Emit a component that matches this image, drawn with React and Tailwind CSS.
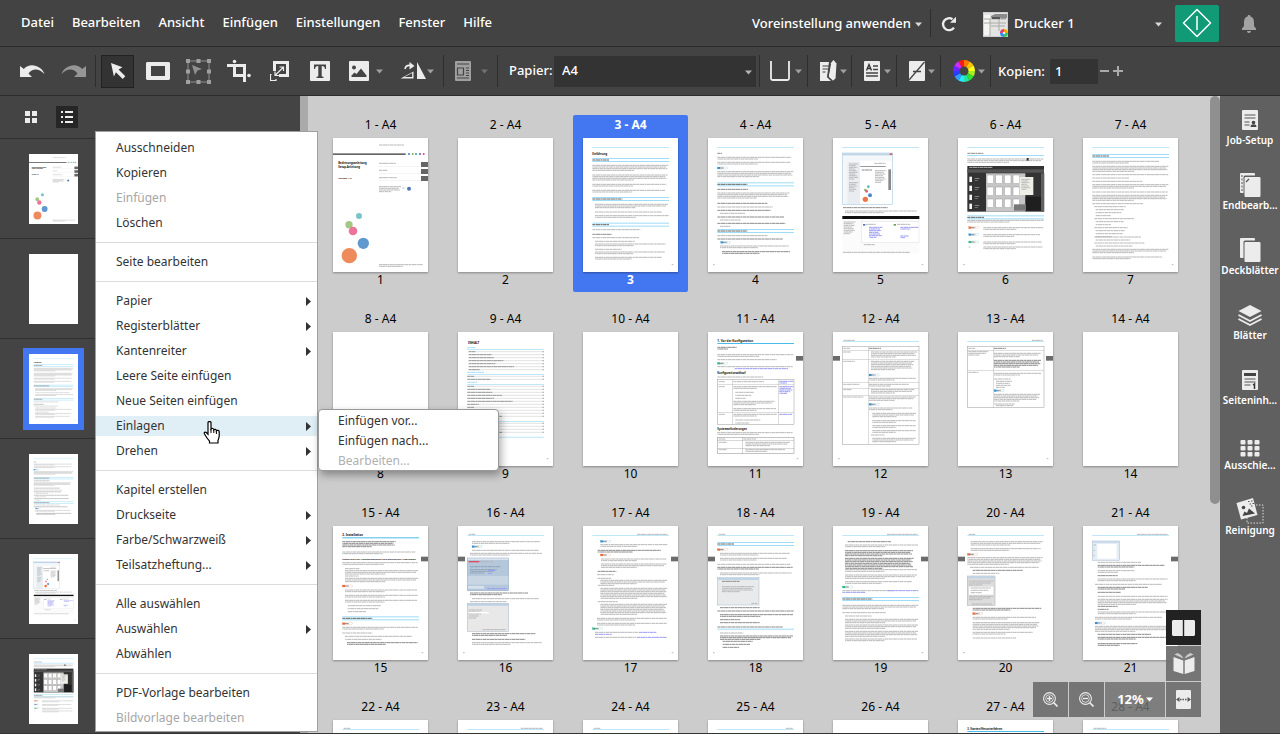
import React from "react";

/* Miniature pages are described in a 285 x 402 unit space. */
const CYAN = "#9fdcf7";
const head = ["r", 28, 27, 230, 2, CYAN];
const tabR = ["r", 264, 92, 21, 14, "#6b6b6b"];
const tabL = ["r", 0, 92, 21, 14, "#6b6b6b"];
const odd = ["t", 266, 380, 5, 1];
const even = ["t", 15, 380, 5, 1];

const PAGES = {
  1: [
    ["t", 138, 21, 76, 1], ["r", 0, 46, 218, 5, "#666"],
    ["c", 228, 48, 3, "#3f7fc4"], ["c", 239, 48, 3, "#7cb854"], ["c", 249, 48, 3, "#2ba5ae"], ["c", 261, 48, 3, "#7d4f9e"], ["c", 272, 48, 3, "#e3447c"],
    ["x", 16, 79, "Bedienungsanleitung", 8], ["x", 16, 89, "Setup-Anleitung", 8], ["x", 16, 123, "Version: 1.2", 7],
    ["t", 138, 76, 50, 1], ["r", 138, 85, 124, 1, "#ddd"], ["t", 138, 97, 26, 1], ["r", 138, 106, 124, 1, "#ddd"], ["t", 138, 119, 54, 1], ["r", 138, 127, 124, 1, "#ddd"],
    ["r", 264, 72, 21, 15, "#666"], ["r", 264, 93, 21, 15, "#666"], ["r", 264, 114, 21, 15, "#666"],
    ["t", 138, 146, 66, 4], ["t", 208, 150, 6, 1], ["c", 228, 152, 6, "#4c78b8"], ["t", 138, 380, 132, 2],
    ["c", 78, 234, 9, "#7ac4c8"], ["c", 48, 260, 11, "#a2c883"], ["c", 60, 279, 13, "#ee7399"], ["c", 91, 316, 17, "#6098d0"], ["c", 49, 353, 23, "#ee8b5c"],
  ],
  2: [],
  3: [
    head, ["x", 28, 51, "Einführung", 8], ["w", 60],
    ["t", 28, 82, 228, 4], ["t", 28, 111, 226, 4], ["t", 28, 139, 222, 2], ["t", 28, 157, 218, 2], ["w", 177],
    ["t", 36, 199, 220, 3], ["t", 36, 222, 200, 1], ["t", 36, 233, 222, 2], ["w", 254], ["t", 28, 275, 144, 1], ["b", 28, 289, 58, 1], ["t", 28, 299, 140, 1],
    ["t", 36, 310, 120, 1], ["t", 36, 318, 212, 2], ["t", 36, 334, 80, 1], ["t", 36, 342, 210, 2], ["t", 36, 358, 200, 2], odd,
  ],
  4: [
    head, ["b", 28, 46, 14, 1], ["t", 28, 58, 222, 2], ["t", 28, 73, 220, 2], ["n", 28, 90, "#3992cf"], ["t", 28, 101, 228, 4], ["w", 133],
    ["b", 28, 154, 92, 1], ["t", 28, 165, 216, 4], ["b", 28, 196, 150, 1], ["t", 28, 207, 166, 1], ["b", 28, 217, 160, 1], ["t", 36, 226, 76, 1], ["b", 28, 237, 200, 1], ["t", 36, 246, 62, 1], ["b", 28, 256, 204, 1], ["t", 36, 265, 32, 1], ["w", 273],
    ["t", 28, 293, 150, 1], ["b", 28, 303, 196, 1], ["n", 38, 313, "#3992cf"], ["t", 36, 324, 206, 2], ["b", 42, 341, 204, 2], even,
  ],
  5: [
    head, ["s", 28, 45, 151, 155, "#f4f7fa", "#9cc2df"], ["r", 29, 46, 149, 6, "#bed3e6"], ["r", 170, 46, 8, 5, "#c86464"],
    ["r", 82, 68, 94, 130, "#fff"], ["t", 124, 76, 34, 1], ["r", 82, 84, 76, 2, "#666"], ["r", 43, 72, 38, 126, "#e9edf0"], ["t", 48, 78, 28, 10], ["t", 48, 134, 28, 6], ["t", 126, 98, 34, 8],
    ["r", 166, 94, 8, 62, "#888"], ["b", 86, 96, 32, 1], ["c", 106, 146, 4, "#58b9bf"], ["c", 97, 156, 4, "#89bd66"], ["c", 101, 160, 4, "#e65288"], ["c", 111, 172, 6, "#4d89c7"], ["c", 97, 184, 8, "#ec7648"],
    ["b", 30, 209, 134, 1], ["t", 36, 219, 215, 2], ["r", 28, 234, 231, 9, "#111"], ["r", 28, 243, 231, 104, "#fbfbfc"], ["s", 86, 250, 172, 64, "#fff", "#ddd"],
    ["t", 32, 252, 36, 8], ["l", 108, 268, 40, 7], ["l", 202, 268, 55, 2], ["l", 202, 294, 26, 2], ["r", 90, 258, 7, 5, "#4f78bd"], ["r", 182, 258, 7, 5, "#65a25b"], ["t", 98, 259, 30, 1], ["t", 192, 259, 40, 1], ["t", 92, 320, 34, 1], ["t", 30, 343, 200, 1], odd,
  ],
  6: [
    head, ["b", 28, 46, 48, 1], ["r", 28, 51, 230, 3, CYAN], ["t", 28, 63, 228, 3], ["r", 206, 60, 6, 8, "#333"],
    ["r", 28, 84, 230, 137, "#333"], ["r", 28, 94, 230, 10, "#555"], ["t", 34, 88, 70, 1], ["r", 84, 106, 118, 115, "#c6c6c6"],
    ...[0, 1, 2].flatMap((r) => [0, 1, 2, 3].map((c) => ["s", 87 + c * 26, 111 + r * 36, 20, 26, "#fff", "#999"])),
    ...[0, 1, 2, 3].flatMap((r) => [["r", 34, 116 + r * 27, 8, 16, "#f5f5f5"], ["r", 50, 120 + r * 27, 14, 2, "#aaa"], ["r", 50, 126 + r * 27, 10, 2, "#888"]]),
    ["r", 185, 117, 41, 54, "#eef0e8"], ["t", 190, 124, 28, 7], ["r", 203, 176, 46, 42, "#1f1f1f"], ["r", 249, 106, 10, 115, "#606060"], ["r", 168, 199, 36, 19, "#777"],
    ["w", 232], ["t", 28, 247, 230, 2],
    ["n", 32, 269, "#e56a3c"], ["t", 76, 269, 180, 2], ["n", 32, 290, "#3992cf"], ["t", 76, 290, 170, 2], ["n", 32, 312, "#35b58c"], ["t", 76, 312, 176, 2], ["t", 32, 327, 5, 1], ["t", 76, 327, 178, 2], even,
  ],
  7: [
    head, ["w", 48], ["t", 28, 70, 200, 2], ["t", 28, 85, 228, 4], ["t", 28, 110, 228, 1], ["t", 28, 120, 110, 1], ["t", 28, 130, 150, 1], ["t", 28, 140, 228, 3], ["t", 28, 162, 226, 1], ["t", 28, 172, 226, 4], ["t", 28, 197, 152, 1],
    ["t", 34, 206, 94, 1], ["t", 38, 215, 84, 3, 9], ["t", 34, 242, 120, 1], ["t", 38, 251, 84, 2, 9], ["t", 34, 269, 100, 1], ["t", 38, 278, 88, 3, 9], ["t", 34, 297, 140, 1], ["t", 38, 306, 104, 1], ["t", 34, 315, 150, 1], ["t", 38, 324, 110, 1],
    ["t", 28, 334, 228, 3], ["t", 28, 357, 210, 2], odd,
  ],
  8: [],
  9: [
    ["x", 30, 35, "INHALT", 9], ["l2", 28, 47, 24, 1], ["r", 28, 51, 230, 2, CYAN], ["d", 32, 59, 7], ["l2", 28, 121, 50, 1], ["r", 28, 126, 230, 2, CYAN], ["d", 28, 133, 2],
    ["l2", 28, 151, 30, 1], ["r", 28, 156, 230, 2, CYAN], ["d", 28, 163, 11], ["r", 28, 268, 230, 2, CYAN], ["d", 28, 274, 4], ["r", 28, 314, 230, 4, "#cdeaf8"], odd,
  ],
  10: [],
  11: [
    ["x", 28, 31, "1. Vor der Konfiguration", 9], ["r", 28, 33, 230, 3, "#4bbbe9"], ["b", 28, 46, 58, 2], ["t", 28, 68, 228, 2], ["t", 28, 83, 178, 1], ["n", 28, 94, "#35b58c"], ["t", 28, 104, 226, 1], ["l", 80, 110, 160, 1],
    ["x", 28, 127, "Konfigurationsablauf", 8], ["t", 28, 135, 138, 1],
    ["s", 28, 142, 230, 136, "#fff", "#999"], ["r", 73, 142, 1, 136, "#999"], ["r", 211, 142, 1, 136, "#999"], ["r", 28, 157, 230, 1, "#999"], ["r", 28, 242, 230, 1, "#999"],
    ["t", 32, 149, 18, 1], ["t", 76, 149, 92, 1], ["l", 214, 148, 42, 2], ["t", 32, 164, 18, 1], ["t", 76, 164, 130, 2], ["l", 214, 164, 42, 5], ["t", 82, 181, 56, 3, 9], ["t", 76, 208, 124, 3], ["t", 76, 230, 128, 2], ["t", 32, 247, 18, 1], ["t", 76, 247, 130, 2], ["l", 214, 247, 38, 1], ["t", 82, 264, 76, 2, 9],
    ["x", 28, 295, "Systemanforderungen", 8], ["t", 28, 302, 226, 2], ["s", 28, 316, 230, 49, "#fff", "#888"], ["r", 103, 316, 1, 49, "#888"], ["r", 28, 326, 230, 1, "#888"], ["r", 28, 349, 230, 1, "#888"],
    ["t", 32, 321, 20, 1], ["t", 106, 321, 38, 1], ["t", 32, 331, 24, 1], ["t", 112, 331, 134, 3], ["t", 32, 353, 24, 1], ["t", 112, 353, 120, 2], sideTab(264), odd,
  ],
  12: [
    ["t", 32, 25, 34, 1], head, ["s", 28, 44, 230, 293, "#fff", "#999"], ["r", 105, 44, 1, 293, "#999"], ["r", 28, 54, 230, 1, "#999"], ["r", 28, 82, 230, 1, "#999"], ["r", 28, 152, 230, 1, "#999"], ["r", 28, 168, 230, 1, "#999"], ["r", 28, 190, 230, 1, "#999"],
    ["t", 31, 49, 20, 1], ["b", 108, 49, 36, 1], ["t", 31, 60, 22, 1], ["t", 114, 60, 138, 4], ["t", 31, 88, 34, 1], ["t", 114, 88, 130, 6], ["n", 108, 129, "#3992cf"], ["t", 108, 139, 140, 2], ["t", 31, 157, 48, 1], ["t", 108, 157, 120, 2], ["t", 31, 173, 24, 1], ["t", 114, 173, 130, 3], ["t", 31, 195, 60, 1], ["t", 108, 195, 140, 3], ["n", 108, 217, "#3992cf"], ["t", 108, 228, 130, 2], ["t", 118, 244, 132, 3], ["t", 118, 266, 130, 2], ["t", 118, 281, 130, 2], ["t", 118, 296, 130, 2], ["t", 114, 309, 40, 1], ["t", 118, 319, 130, 3], sideTab(0), even,
  ],
  13: [
    ["t", 222, 25, 33, 1], head, ["s", 28, 44, 230, 183, "#fff", "#999"], ["r", 105, 44, 1, 183, "#999"], ["r", 28, 54, 230, 1, "#999"], ["r", 28, 115, 230, 1, "#999"],
    ["t", 31, 49, 20, 1], ["b", 108, 49, 36, 1], ["t", 31, 59, 60, 3], ["t", 108, 64, 140, 3], ["b", 108, 85, 142, 5], ["t", 31, 121, 30, 1], ["t", 108, 124, 142, 2], ["t", 108, 141, 50, 1], ["t", 114, 148, 48, 4, 6], ["n", 108, 176, "#3992cf"], ["t", 108, 187, 138, 5], ["t", 108, 216, 62, 1], ["t", 114, 221, 52, 1], sideTab(264), odd,
  ],
  14: [],
  15: [
    ["x", 28, 31, "2. Installation", 9], ["r", 28, 34, 230, 3, "#4bbbe9"], ["b", 28, 47, 160, 4], ["t", 28, 78, 220, 2], ["x", 28, 102, "Installieren der Hauptanwendung und zugehöriger Programme", 7], ["t", 28, 110, 226, 2],
    ["t", 36, 128, 44, 1], ["t", 36, 134, 220, 3], ["t", 36, 150, 40, 1], ["t", 36, 157, 220, 3], ["n", 28, 180, "#e56a3c"], ["t", 36, 192, 216, 2], ["t", 36, 208, 218, 2], ["t", 36, 223, 216, 2], ["t", 44, 239, 100, 3, 9], ["w", 271], ["n", 28, 293, "#e56a3c"], ["t", 28, 304, 226, 2], ["t", 28, 321, 90, 1], ["t", 36, 331, 200, 2, 9], ["b", 42, 350, 212, 2], tabR, odd,
  ],
  16: [
    ["t", 32, 25, 20, 1], head, ["t", 42, 47, 204, 2], ["n", 42, 62, "#3992cf"], ["t", 42, 73, 200, 1], ["t", 36, 82, 216, 2],
    ["s", 28, 96, 124, 98, "#b5c7da", "#8aa4be"], ["r", 29, 97, 122, 5, "#dce5ef"], ["r", 29, 150, 122, 26, "#c8d6e4"], ["r", 32, 105, 32, 4, "#e04b5c"], ["t", 66, 107, 40, 1], ["g", 36, 122, 92, 1], ["g", 36, 131, 80, 3], ["l", 90, 133, 22, 2, 9], ["r", 30, 180, 48, 8, "#d8e2ec"], ["l", 88, 188, 58, 1],
    ["b", 36, 201, 174, 2], ["t", 42, 218, 200, 1], ["t", 36, 227, 110, 1], ["s", 28, 232, 124, 84, "#e8e8e8", "#a9b4c0"], ["r", 29, 233, 122, 6, "#b9d0e8"], ["t", 32, 252, 40, 5, 6], ["r", 32, 258, 60, 4, "#fff"], ["t", 74, 311, 70, 1],
    ["b", 42, 323, 190, 2], ["b", 42, 340, 160, 1], ["t", 42, 350, 210, 2], tabL, even,
  ],
  17: [
    ["t", 162, 25, 92, 1], head, ["n", 52, 46, "#3992cf"], ["t", 52, 56, 202, 2], ["b", 44, 73, 190, 2], ["n", 52, 87, "#e56a3c"], ["t", 54, 99, 196, 2], ["t", 54, 114, 196, 3], ["b", 44, 136, 56, 1], ["t", 42, 146, 50, 1], ["t", 44, 157, 40, 1], ["t", 52, 163, 200, 3], ["t", 44, 178, 50, 1], ["t", 52, 187, 202, 7], ["t", 44, 227, 60, 1], ["t", 52, 235, 200, 7], ["t", 42, 277, 210, 2], ["t", 42, 292, 210, 2], ["n", 28, 308, "#35b58c"], ["t", 36, 319, 130, 1], ["l", 168, 319, 52, 1], ["l", 36, 325, 50, 1], ["t", 36, 334, 124, 1], ["l", 162, 334, 90, 1], tabR, odd,
  ],
  18: [
    ["t", 32, 25, 20, 1], head, ["w", 48], ["n", 28, 71, "#e56a3c"], ["t", 36, 82, 210, 2], ["t", 36, 97, 200, 2], ["t", 28, 115, 220, 1], ["b", 28, 124, 226, 2], ["t", 36, 141, 215, 2],
    ["s", 28, 155, 125, 82, "#e8eaec", "#a9b8c6"], ["r", 29, 156, 123, 6, "#c1d5e9"], ["b", 42, 166, 54, 1], ["t", 42, 182, 96, 4], ["t", 130, 232, 18, 1],
    ["b", 36, 245, 120, 1], ["b", 28, 255, 230, 1], ["b", 36, 266, 220, 2], ["b", 36, 281, 60, 1], ["b", 36, 290, 120, 1], ["b", 28, 303, 196, 1], ["r", 28, 308, 230, 3, CYAN], ["t", 36, 321, 70, 1], ["b", 36, 330, 220, 3], ["b", 44, 346, 90, 3, 9], tabL, even,
  ],
  19: [
    ["t", 162, 25, 92, 1], head, ["b", 44, 47, 130, 1], ["t", 36, 57, 220, 2], ["b", 36, 74, 204, 4], ["b", 36, 97, 206, 7], ["t", 36, 131, 216, 2], ["t", 36, 147, 216, 3], ["t", 36, 167, 200, 2], ["n", 28, 183, "#35b58c"], ["t", 28, 194, 150, 1], ["l", 164, 194, 92, 1], ["l", 28, 199, 70, 1], ["w", 213], ["t", 28, 238, 228, 3], ["t", 28, 260, 130, 1], ["t", 36, 270, 80, 1], ["t", 36, 280, 220, 3], ["t", 36, 297, 220, 3], ["t", 36, 316, 220, 4], ["t", 36, 339, 216, 2], tabR, odd,
  ],
  20: [
    ["t", 32, 25, 20, 1], head, ["t", 38, 47, 216, 3], ["t", 38, 68, 210, 2], ["n", 28, 85, "#e56a3c"], ["t", 28, 95, 226, 5], ["t", 36, 124, 206, 1], ["b", 44, 133, 150, 1], ["t", 44, 142, 80, 1],
    ["s", 28, 150, 83, 88, "#ddd", "#a9a9a9"], ["r", 29, 151, 81, 6, "#c1d5e9"], ["t", 32, 165, 74, 3, 6], ["r", 33, 182, 73, 24, "#fff"], ["t", 38, 186, 60, 3, 7], ["t", 33, 211, 72, 3], ["t", 42, 234, 60, 1],
    ["b", 44, 247, 206, 2], ["n", 44, 263, "#e56a3c"], ["t", 44, 274, 190, 2], ["t", 44, 290, 200, 5], ["t", 44, 319, 180, 2], ["t", 44, 336, 130, 1], tabL, even,
  ],
  21: [
    ["t", 162, 25, 92, 1], head, ["s", 28, 45, 82, 58, "#e4edf5", "#a9b8c6"], ["r", 29, 46, 80, 4, "#c1d5e9"], ["r", 43, 54, 58, 44, "#fff"], ["t", 31, 57, 8, 5, 8],
    ["t", 44, 109, 130, 1], ["b", 44, 118, 200, 2], ["t", 44, 134, 110, 2], ["b", 44, 149, 60, 1], ["t", 44, 159, 210, 2], ["t", 36, 175, 200, 1], ["b", 44, 184, 150, 2], ["b", 44, 199, 70, 1], ["t", 44, 211, 210, 1], ["t", 44, 220, 210, 4], ["b", 44, 241, 60, 2, 9], ["t", 44, 258, 210, 2], ["t", 36, 274, 200, 2], ["n", 36, 291, "#3992cf"], ["t", 36, 301, 220, 4], ["b", 44, 325, 160, 1], ["b", 44, 334, 210, 2], ["b", 44, 353, 120, 2], tabR, odd,
  ],
  22: [["t", 32, 25, 20, 1], head],
  23: [["t", 188, 25, 66, 1], head],
  24: [["t", 32, 25, 20, 1], head],
  25: [["t", 234, 25, 20, 1], head],
  26: [],
  27: [["x", 28, 31, "3. Starten/Herunterfahren", 8], ["r", 28, 33, 230, 3, "#4bbbe9"]],
  28: [["t", 32, 25, 38, 1], head],
};

function sideTab(x) {
  return ["r", x, 72, 21, 14, "#6b6b6b"];
}

function Lines({ x, y, w, n, pitch = 5, color, width = 3, dash = "9 1 14 1 6 1 11 1" }) {
  return Array.from({ length: n }, (_, i) => {
    const end = n > 1 && i === n - 1 ? w * 0.55 : w - ((i * 7) % 11);
    return (
      <line key={i} x1={x} x2={x + end} y1={y + i * pitch} y2={y + i * pitch} stroke={color} strokeWidth={width} strokeDasharray={dash} strokeDashoffset={i * 5} />
    );
  });
}

const INK = { t: "#b8b8b8", b: "#8c8c8c", l: "#9a9af2", l2: "#9fdcf7", g: "#8fa3b8" };

function Mark({ m }) {
  const [k, x, y, a, b, c] = m;
  switch (k) {
    case "r":
      return <rect x={x} y={y} width={a} height={b} fill={c} />;
    case "s":
      return <rect x={x} y={y} width={a} height={b} fill={c} stroke={m[6]} strokeWidth="1.5" />;
    case "c":
      return <circle cx={x} cy={y} r={a} fill={b} />;
    case "t":
    case "b":
    case "l":
    case "l2":
    case "g":
      return <Lines x={x} y={y} w={a} n={b} pitch={c} color={INK[k]} />;
    case "w":
      return (
        <g>
          <rect x="28" y={x} width="230" height="3" fill={CYAN} />
          <rect x="28" y={x + 9} width="230" height="3" fill={CYAN} />
          <Lines x={28} y={x + 6} w={x % 2 ? 90 : 50} n={1} color="#666" />
        </g>
      );
    case "n":
      return (
        <g>
          <rect x={x} y={y - 3} width="30" height="6" fill="#fff" stroke={a} strokeWidth=".5" />
          <rect x={x} y={y - 3} width="8" height="6" fill={a} />
          <Lines x={x + 8} y={y} w={12} n={1} color="#888" />
        </g>
      );
    case "d":
      return Array.from({ length: a }, (_, i) => (
        <g key={i}>
          <line x1={x} x2="255" y1={y + i * 9} y2={y + i * 9} stroke="#d4d4d4" strokeWidth="2" />
          <Lines x={x} y={y + i * 9} w={[20, 70, 76, 104, 80, 136, 34][i % 7]} n={1} color="#999" />
          <rect x="254" y={y + i * 9 - 2} width="3" height="4" fill="#999" />
        </g>
      ));
    case "x":
      return (
        <text x={x} y={y} fontSize={b} fontWeight="700" fill="#111">
          {a}
        </text>
      );
    default:
      return null;
  }
}

function Page({ n, className }) {
  return (
    <svg viewBox="0 0 285 402" preserveAspectRatio="none" className={className} aria-hidden="true">
      <rect width="285" height="402" fill="#fff" />
      {PAGES[n].map((m, i) => (
        <Mark key={i} m={m} />
      ))}
    </svg>
  );
}

const Caret = ({ className = "text-[#a0a0a0]" }) => (
  <svg width="7" height="5" viewBox="0 0 7 5" className={`shrink-0 ${className}`} aria-hidden="true">
    <path d="M0 .5h7L3.500 4.500z" fill="currentColor" />
  </svg>
);

const Sep = ({ className = "" }) => <div className={`h-8 w-px shrink-0 bg-[#2e2e2e] ${className}`} />;

function Icon({ w, h, children }) {
  return (
    <svg width={w} height={h} viewBox={`0 0 ${w} ${h}`} fill="none" className="shrink-0" aria-hidden="true">
      {children}
    </svg>
  );
}

const F = "#ececec";

function Tool({ label, className = "", caret, caretClass, children }) {
  return (
    <button type="button" aria-label={label} className={`flex h-9 shrink-0 items-center ${caret ? "" : "justify-center"} ${className}`}>
      {children}
      {caret && <Caret className={caretClass} />}
    </button>
  );
}

const WHEEL = ["#ff7a00", "#ffc400", "#ffff1a", "#a6f01c", "#2fe22f", "#22e6a0", "#28e8ff", "#2f9cff", "#2a3cff", "#6a28ff", "#d12cff", "#ff1a1a"];
function wedge(i) {
  const p = (a) => `${11 + 11 * Math.sin(a)} ${11 - 11 * Math.cos(a)}`;
  const s = Math.PI / 6;
  return `M11 11L${p(i * s)}A11 11 0 0 1 ${p((i + 1) * s)}Z`;
}
const Wheel = () => (
  <Icon w={22} h={22}>
    {WHEEL.map((c, i) => (
      <path key={c} d={wedge(i)} fill={c} />
    ))}
    <circle cx="11" cy="11" r="4.5" fill="#444" />
  </Icon>
);

function Header() {
  return (
    <header className="flex h-[47px] shrink-0 items-center border-b border-[#2c2c2c] text-[13px] font-medium text-white">
      <nav className="flex gap-[18px] pl-[21px]">
        {["Datei", "Bearbeiten", "Ansicht", "Einfügen", "Einstellungen", "Fenster", "Hilfe"].map((t) => (
          <button type="button" key={t}>{t}</button>
        ))}
      </nav>
      <div className="ml-auto flex items-center">
        <button type="button" className="flex items-center gap-1 pt-0.5">
          Voreinstellung anwenden
          <Caret className="text-[#d8d8d8]" />
        </button>
        <div className="ml-2 h-7 w-px bg-[#2e2e2e]" />
        <button type="button" aria-label="Aktualisieren" className="ml-2.5 pt-0.5">
          <Icon w={16} h={16}>
            <path d="M13 11.600A6 6 0 1 1 11.500 3.300" stroke={F} strokeWidth="2.300" />
            <path d="M15 .8v6H9z" fill={F} />
          </Icon>
        </button>
        <label className="ml-[26px] flex w-[179px] items-center pt-0.5">
          <Icon w={25} h={25}>
            <rect width="25" height="25" fill="#e4e4e2" />
            <path d="M8 4l4-2h12v4H8zM18 4h5v3h-5z" fill="#8b8b8b" />
            <path d="M1 3h6v20H1z" fill="#f5f5f3" />
            <path d="M1 7h22M1 11h22M8 14h14M7 7v17M16 7v12" stroke="#aaa" />
            <path d="M9 5h8v2H9z" fill="#555" />
            <path d="M0 0h25v25H0z" stroke="#bbb" />
            <circle cx="21" cy="21" r="4" fill="#fff" />
            <path d="M21 17a4 4 0 0 1 4 4h-4z" fill="#f7a400" />
            <path d="M25 21a4 4 0 0 1-4 4v-4z" fill="#35c46a" />
            <path d="M21 25a4 4 0 0 1-4-4h4z" fill="#2f8df5" />
            <path d="M17 21a4 4 0 0 1 4-4v4z" fill="#e43d77" />
            <circle cx="21" cy="21" r="1.300" fill="#eee" />
          </Icon>
          <select aria-label="Drucker" className="ml-1.5 h-7 min-w-0 grow appearance-none bg-transparent outline-none">
            <option>Drucker 1</option>
          </select>
          <Caret className="text-[#d8d8d8]" />
        </label>
        <button type="button" aria-label="Drucken" className="ml-[13px] flex h-[37px] w-11 items-center justify-center rounded-[2px] bg-[#109a76]">
          <Icon w={30} h={30}>
            <path d="M15 1.500L28.500 15 15 28.500 1.500 15zM15 8v14" stroke="#fff" strokeWidth="1.500" strokeLinejoin="round" />
          </Icon>
        </button>
        <button type="button" aria-label="Benachrichtigungen" className="mr-[23px] ml-[22px] pt-0.5">
          <Icon w={16} h={18}>
            <path d="M8 0c1 0 1.500.6 1.500 1.500C12 2.200 13 4.500 13 7v4l2 2.500V15H1v-1.500L3 11V7c0-2.500 1-4.800 3.500-5.500C6.500.6 7 0 8 0zM6 16h4c0 1.200-.8 2-2 2s-2-.8-2-2z" fill="#a3a3a3" />
          </Icon>
        </button>
      </div>
    </header>
  );
}

function Toolbar() {
  return (
    <div role="toolbar" className="flex h-[49px] shrink-0 items-center border-b border-[#2c2c2c] pl-3 text-[13px] font-medium text-white">
      <Tool label="Rückgängig" className="w-10">
        <Icon w={26} h={16}>
          <path d="M1 3v11h12L9.500 10.500C13 6 19 4.500 25.500 11 23 3 11-1.500 4.800 6z" fill={F} />
        </Icon>
      </Tool>
      <Tool label="Wiederholen" className="w-[43px]">
        <Icon w={26} h={16}>
          <path d="M25 3v11H13l3.500-3.500C13 6 7 4.500.5 11 3 3 15-1.500 21.200 6z" fill="#969696" />
        </Icon>
      </Tool>
      <Sep />
      <button type="button" aria-label="Auswählen" aria-pressed="true" className="ml-[5px] flex h-[33px] w-[33px] shrink-0 items-center justify-center border border-[#222] bg-[#333]">
        <Icon w={16} h={17}>
          <path d="M1 0l11.500 4.200-4 2.300 6.800 6.800-2.600 2.700-6.800-6.800-2 4.200z" fill={F} />
        </Icon>
      </button>
      <Tool label="Rahmen" className="w-12">
        <Icon w={24} h={18}>
          <path fillRule="evenodd" d="M1 0h22l1 1v16l-1 1H1l-1-1V1zM5 4v10h14V4z" fill={F} />
        </Icon>
      </Tool>
      <Tool label="Bereich anpassen" className="w-[33px]">
        <Icon w={25} h={25}>
          <path d="M2 2h21v21H2z" stroke="#8f8f8f" />
          <path d="M0 0h4v4H0zM10.500 0h4v4h-4zM21 0h4v4h-4zM0 10.500h4v4H0zM21 10.500h4v4h-4zM0 21h4v4H0zM10.500 21h4v4h-4zM21 21h4v4h-4z" fill="#a0a0a0" />
          <path d="M6 6l10 4-4.500 1.500L9 16z" fill="#8f8f8f" />
        </Icon>
      </Tool>
      <Tool label="Zuschneiden" className="w-12">
        <Icon w={24} h={24}>
          <path d="M0 6.500h17.500V23M7.500 6v10.500H19" stroke={F} strokeWidth="3" />
          <circle cx="7.500" cy="2.500" r="1.800" fill={F} />
          <circle cx="22" cy="16.500" r="1.800" fill={F} />
        </Icon>
      </Tool>
      <Tool label="Größe ändern" className="w-[33px]">
        <Icon w={20} h={20}>
          <path fillRule="evenodd" d="M3 0h16v16H9v-3h7V3H6v7H3z" fill={F} />
          <path d="M1.500 13.500h-1v6h5.500v-1.500" stroke={F} strokeWidth="1.200" />
          <path d="M5.500 14l7.500-7.500M9.500 6h4v4M5 10.500v4h4" stroke={F} strokeWidth="1.200" />
        </Icon>
      </Tool>
      <Tool label="Text" className="w-12">
        <Icon w={20} h={20}>
          <rect width="20" height="20" rx="1" fill={F} />
          <path d="M4 3.500h12V8h-1c-.2-2-1-3-3.300-3v9.500c0 1 .5 1.300 1.800 1.300V17h-7v-1.200c1.300 0 1.800-.3 1.800-1.300V5C6 5 5.200 6 5 8H4z" fill="#444" />
        </Icon>
      </Tool>
      <Tool label="Bild" className="w-12 gap-[7px] pl-[5px]" caret>
        <Icon w={20} h={20}>
          <rect width="20" height="20" rx="1" fill={F} />
          <circle cx="5" cy="6.500" r="2" fill="#444" />
          <path d="M2.500 16v-1.500l3-3 2 1.500L12 7.500l5.500 7V16z" fill="#444" />
        </Icon>
      </Tool>
      <Tool label="Spiegeln" className="w-[51px] gap-px pl-2" caret>
        <Icon w={26} h={18}>
          <path d="M.5 16.500h13v-7zM17 0l9 17h-9z" fill={F} />
          <path d="M4.500 15.100h7.600v-4.200z" fill="#444" />
          <path d="M5 7c.5-3 3-4 6-3.500" stroke={F} strokeWidth="1.600" />
          <path d="M9.500 0l5 4-5 3.500z" fill={F} />
        </Icon>
      </Tool>
      <Sep />
      <Tool label="Layout" className="w-[53px] gap-2.5 pl-[11px]" caret caretClass="text-[#727272]">
        <Icon w={16} h={20}>
          <rect width="16" height="20" rx="1" fill="#a0a0a0" />
          <path d="M2 3h12M2 17h12M11 7h3M11 9.500h3M11 12h3M11 14.500h3" stroke="#444" strokeWidth="1.200" />
          <path d="M2.500 7h6v7h-6z" stroke="#444" strokeWidth="1.200" />
        </Icon>
      </Tool>
      <Sep />
      <label htmlFor="paper" className="w-14 shrink-0 pl-[11px]">Papier:</label>
      <div className="relative w-[202px] min-w-0">
        <select id="paper" className="block h-[31px] w-full appearance-none bg-[#333] pl-2 outline-none">
          <option>A4</option>
        </select>
        <span className="pointer-events-none absolute top-[14px] right-1"><Caret className="text-[#b5b5b5]" /></span>
      </div>
      <Sep className="ml-[3px]" />
      <Tool label="Heften" className="w-[47px] gap-[5px] pl-2.5" caret>
        <Icon w={20} h={20}>
          <path d="M1 0v17.500a1.500 1.500 0 0 0 1.500 1.500h15a1.500 1.500 0 0 0 1.500-1.500V0" stroke={F} strokeWidth="1.800" />
        </Icon>
      </Tool>
      <Sep />
      <Tool label="Falzen" className="w-[43px] gap-[3px] pl-3" caret>
        <Icon w={17} h={22}>
          <path d="M0 2h9l-2 15 4 4H0z" fill={F} />
          <path d="M10.500 3.500L13.500 0l3 3.500-1 15-3 2.500-4-4z" fill={F} />
          <path d="M2.500 6h6.500M2.500 9h5.500M2.500 12h3" stroke="#444" strokeWidth="1.200" />
          <path d="M10.500 3.500L8 17l4.500 4" stroke="#444" strokeWidth="1.200" />
        </Icon>
      </Tool>
      <Sep />
      <Tool label="Kopfzeile" className="w-11 gap-1 pl-3" caret>
        <Icon w={16} h={20}>
          <rect width="16" height="20" rx="1" fill={F} />
          <path d="M9 5h5M9 8.500h5M2 12h12M2 15h12" stroke="#444" strokeWidth="1.300" />
          <path d="M2.500 9.500L5 3.500l2.500 6M3.500 7.500h3" stroke="#333" strokeWidth="1.300" />
        </Icon>
      </Tool>
      <Sep />
      <Tool label="Wasserzeichen" className="w-[43px] gap-[3px] pl-3" caret>
        <Icon w={16} h={20}>
          <rect width="16" height="20" rx="1" fill={F} />
          <path d="M0 19L15.500 1M4 10.500h8" stroke="#444" strokeWidth="1.300" />
        </Icon>
      </Tool>
      <Sep />
      <Tool label="Farbe" className="w-[49px] gap-[3px] pl-3" caret>
        <Wheel />
      </Tool>
      <Sep />
      <label htmlFor="copies" className="w-[59px] shrink-0 pt-0.5 pl-[7px]">Kopien:</label>
      <input id="copies" defaultValue="1" className="h-[25px] w-12 bg-[#333] pl-[5px] outline-none" />
      <button type="button" aria-label="Weniger" className="ml-0.5 shrink-0">
        <Icon w={9} h={10}><path d="M0 5h9" stroke="#aaa" strokeWidth="2" /></Icon>
      </button>
      <button type="button" aria-label="Mehr" className="ml-1 shrink-0">
        <Icon w={10} h={10}><path d="M0 5h10M5 0v10" stroke="#aaa" strokeWidth="2" /></Icon>
      </button>
    </div>
  );
}

function Sidebar() {
  return (
    <aside className="flex w-[300px] shrink-0 flex-col overflow-hidden bg-[#444]">
      <div className="flex h-[42px] shrink-0 items-center gap-3.5 pl-5">
        <button type="button" aria-label="Kacheln" className="flex h-[22px] w-[22px] items-center justify-center">
          <Icon w={12} h={12}><path d="M0 0h5v5H0zM7 0h5v5H7zM0 7h5v5H0zM7 7h5v5H7z" fill={F} /></Icon>
        </button>
        <button type="button" aria-label="Liste" aria-pressed="true" className="flex h-[22px] w-[22px] items-center justify-center bg-[#262626]">
          <Icon w={12} h={12}><path d="M0 0h2v2H0zM4 0h8v2H4zM0 5h2v2H0zM4 5h8v2H4zM0 10h2v2H0zM4 10h8v2H4z" fill={F} /></Icon>
        </button>
      </div>
      {[1, 2, 3, 4, 5, 6].map((n) => (
        <div key={n} className="h-[100px] shrink-0 border-t border-[#303030] pt-[9px] pl-[23px]">
          <button type="button" aria-label={`Seite ${n}`} className={n === 3 ? "block bg-[#4377f2] p-1.5" : "block p-1.5"}>
            <Page n={n} className="block h-[70px] w-[49px]" />
          </button>
        </div>
      ))}
    </aside>
  );
}

function Cell({ n }) {
  const on = n === 3;
  return (
    <button type="button" className={`flex h-[177px] w-[115px] flex-col items-center rounded-[2px] ${on ? "bg-[#4377f2] font-bold text-white" : "text-black"}`}>
      <span className="h-[23px] leading-5">{n} - A4</span>
      <Page n={n} className="block h-[134px] w-[95px] shadow-[0_1px_2px_rgba(0,0,0,0.35)]" />
      <span className="leading-4">{n}</span>
    </button>
  );
}

function ZoomGlyph({ plus }) {
  return (
    <Icon w={15} h={15}>
      <circle cx="6.500" cy="6.500" r="5.900" stroke={F} strokeWidth="1.100" />
      <circle cx="6.500" cy="6.500" r="3.800" stroke={F} strokeWidth=".8" />
      <path d={plus ? "M4 6.500h5M6.500 4v5" : "M4 6.500h5"} stroke={F} strokeWidth="1.400" />
      <path d="M10.500 10.500l4 4" stroke={F} strokeWidth="1.600" />
    </Icon>
  );
}

const fl = "flex h-[35px] items-center justify-center bg-[#707070]/95";

function ViewControls() {
  return (
    <div className="absolute right-[9px] bottom-4 flex items-end gap-px">
      <button type="button" aria-label="Vergrößern" className={`${fl} w-[35px]`}><ZoomGlyph plus /></button>
      <button type="button" aria-label="Verkleinern" className={`${fl} w-[35px]`}><ZoomGlyph /></button>
      <button type="button" className="flex h-[35px] w-[60px] items-center justify-center gap-0.5 bg-[#707070]/85 text-[13px] font-bold text-white">
        12%
        <Caret className="text-white" />
      </button>
      <div className="flex flex-col gap-px">
        <button type="button" aria-label="Doppelseite" aria-pressed="true" className="flex h-[35px] w-[35px] items-center justify-center bg-[#222]">
          <Icon w={23} h={16}><path d="M1 0h9.800v16H1l-1-1V1zM12.200 0H22l1 1v14l-1 1h-9.800z" fill={F} /></Icon>
        </button>
        <button type="button" aria-label="Buchansicht" className={`${fl} w-[35px]`}>
          <Icon w={22} h={22}>
            <path d="M.5 4l9.800 3.500V21L.5 18zM21.500 4l-9.800 3.500V21l9.800-3z" fill={F} />
            <path d="M1.500 1.500l3-1.500c3 1 5 3 6 5.500L7 4zM20.500 1.500l-3-1.500c-3 1-5 3-6 5.500L15 4z" fill="#ccc" />
          </Icon>
        </button>
        <button type="button" aria-label="Seitenbreite" className={`${fl} w-[35px]`}>
          <Icon w={15} h={19}>
            <rect width="15" height="19" rx="1" fill={F} />
            <path d="M0 9.500L3.500 7v5zM15 9.500L11.500 7v5z" fill="#555" />
            <path d="M4 9.500h7" stroke="#555" strokeDasharray="1.500 1" strokeWidth="1.300" />
          </Icon>
        </button>
      </div>
    </div>
  );
}

const PANEL = [
  ["Job-Setup", <g key="a"><rect x="4" y="2" width="16" height="20" rx="1" fill={F} /><path d="M6.500 7h11M6.500 10h11M6.500 14h5M6.500 17h5" stroke="#555" strokeWidth="1.200" /><circle cx="15.500" cy="14.500" r="1.800" fill="#444" /><path d="M12.500 19c0-2 1.200-2.700 3-2.700s3 .7 3 2.700z" fill="#444" /></g>],
  ["Endbearb…", <g key="b"><rect x="2" width="15" height="20" rx="1" fill={F} /><path d="M4 2v17" stroke="#555" strokeDasharray="2 1.500" /><rect x="5.500" y="2.500" width="17" height="21.500" rx="1.500" fill="#5f5f5f" /><rect x="6.500" y="4" width="16" height="20" rx="1" fill={F} /><path d="M8 9l3-3" stroke="#555" strokeWidth="1.300" /></g>],
  ["Deckblätter", <g key="c"><rect x="2" width="15" height="20" rx="1" fill={F} /><rect x="5.500" y="2.500" width="17" height="21.500" rx="1.500" fill="#5f5f5f" /><rect x="6.500" y="4" width="16" height="20" rx="1" fill={F} /></g>],
  ["Blätter", <g key="d"><path d="M12 2l11.500 6L12 14 .5 8z" fill={F} /><path d="M.5 12L12 18l11.500-6M.5 16L12 22l11.500-6" stroke={F} strokeWidth="1.800" /></g>],
  ["Seiteninh…", <g key="e"><rect x="4" y="2" width="16" height="20" rx="1" fill={F} /><path d="M6 5h12v3H6z" fill="#444" /><path d="M6.500 11h11M6.500 14h11M6.500 17h6" stroke="#555" strokeWidth="1.200" /><path d="M15 17l1.500-1v5" stroke="#333" strokeWidth="1.500" /></g>],
  ["Ausschie…", <g key="f">{[7, 13, 19].flatMap((y) => [2.5, 9.5, 16.5].map((x) => <rect key={`${x}-${y}`} x={x} y={y} width="5" height="4.500" rx="1" fill={F} />))}</g>],
  ["Reinigung", <g key="g"><path d="M9 7h16v18H9z" stroke="#ddd" strokeDasharray="1.500 1.500" /><path d="M-1.500 5L15 0l4.500 17L3 21.500z" fill={F} /><circle cx="5.500" cy="9.500" r="1.800" fill="#444" /><path d="M4.500 18l2-4.500 2.500 1.500 2-4.500 6 5z" fill="#444" /><path d="M10 3.500h1.500M13 3h1.500M11.500 6H13M14.500 5.500H16M13 8h1.500" stroke="#555" /></g>],
];

function RightPanel() {
  return (
    <aside className="flex w-[60px] shrink-0 flex-col items-center gap-[25px] overflow-hidden bg-[#606060] pt-3 text-[10px] font-semibold text-white">
      {PANEL.map(([t, icon]) => (
        <button type="button" key={t} className="flex flex-col items-center">
          <svg width="24" height="24" viewBox="0 0 24 24" fill="none" className="overflow-visible" aria-hidden="true">{icon}</svg>
          <span className="leading-4 whitespace-nowrap">{t}</span>
        </button>
      ))}
    </aside>
  );
}

const MENU = [
  [["Ausschneiden"], ["Kopieren"], ["Einfügen", "off"], ["Löschen"]],
  [["Seite bearbeiten"]],
  [["Papier", "sub"], ["Registerblätter", "sub"], ["Kantenreiter", "sub"], ["Leere Seite einfügen"], ["Neue Seiten einfügen"], ["Einlagen", "open"], ["Drehen", "sub"]],
  [["Kapitel erstellen"], ["Druckseite", "sub"], ["Farbe/Schwarzweiß", "sub"], ["Teilsatzheftung...", "sub"]],
  [["Alle auswählen"], ["Auswählen", "sub"], ["Abwählen"]],
  [["PDF-Vorlage bearbeiten"], ["Bildvorlage bearbeiten", "off"]],
];

function ContextMenu() {
  return (
    <div role="menu" className="absolute top-[131px] left-[95px] z-10 w-[223px] border border-[#a0a0a0] bg-white pt-1.5 pb-[3px] text-[12px] text-[#333]">
      {MENU.map((group, g) => (
        <div key={g} role="group" className={`flex flex-col gap-[5px] ${g ? "mt-[9px] border-t border-[#dcdcdc] pt-[9px]" : ""}`}>
          {group.map(([t, kind]) => (
            <button
              type="button"
              role="menuitem"
              key={t}
              disabled={kind === "off"}
              className={`flex h-5 w-full items-center justify-between pr-1.5 pl-5 ${kind === "open" ? "bg-[#e0eef6]" : ""} ${kind === "off" ? "text-[#a6a6a6]" : ""}`}
            >
              <span className="leading-5">{t}</span>
              {(kind === "sub" || kind === "open") && <Icon w={5} h={9}><path d="M0 0l5 4.500L0 9z" fill="#333" /></Icon>}
            </button>
          ))}
        </div>
      ))}
    </div>
  );
}

function SubMenu() {
  return (
    <div role="menu" className="absolute top-[409px] left-[318px] z-20 w-[181px] rounded-[4px] border border-[#999] bg-white text-[12px] text-[#333] shadow-[2px_4px_8px_rgba(0,0,0,0.35)]">
      {["Einfügen vor...", "Einfügen nach...", "Bearbeiten..."].map((t, i) => (
        <button type="button" role="menuitem" key={t} disabled={i === 2} className={`block h-5 w-full pt-0.5 pl-[19px] text-left leading-[18px] ${i === 2 ? "text-[#b0b0b0]" : ""}`}>
          {t}
        </button>
      ))}
    </div>
  );
}

const Pointer = () => (
  <svg width="18" height="24" viewBox="0 0 18 24" className="absolute top-[421px] left-[203px] z-30" aria-hidden="true">
    <path d="M5 1.500c0-1.300 3-1.300 3 0V8c.8-1 2.800-.6 2.800.8.8-.9 2.600-.4 2.600.9.8-.8 2.800-.3 2.800 1.100V15c0 2-.8 3-1.200 4.500V22H6.500v-1.800C5 18.500 3.500 16.500 1.500 13c-.8-1.500.6-2.400 1.800-1.500L5 13.200z" fill="#fff" stroke="#000" strokeWidth="1.200" />
    <path d="M8 8v4M10.800 9v3M13.400 10v3" stroke="#000" />
  </svg>
);

export default function App() {
  return (
    <div className="relative flex h-screen flex-col overflow-hidden bg-[#434343] font-['Noto_Sans',sans-serif]">
      <Header />
      <Toolbar />
      <div className="flex min-h-0 grow border-b border-[#333]">
        <Sidebar />
        <div className="w-2 shrink-0 bg-[#aaa]" />
        <main className="relative min-w-0 grow overflow-hidden bg-[#ccc]">
          <div className="grid grid-cols-[repeat(auto-fill,115px)] gap-x-2.5 gap-y-[17px] pt-[19px] pl-[15px] text-[12px]">
            {Array.from({ length: 28 }, (_, i) => (
              <Cell key={i} n={i + 1} />
            ))}
          </div>
          <ViewControls />
        </main>
        <div className="w-2.5 shrink-0 bg-[#ccc]">
          <div className="h-[64%] rounded-full bg-[#8f8f8f]" />
        </div>
        <RightPanel />
      </div>
      <ContextMenu />
      <SubMenu />
      <Pointer />
    </div>
  );
}
